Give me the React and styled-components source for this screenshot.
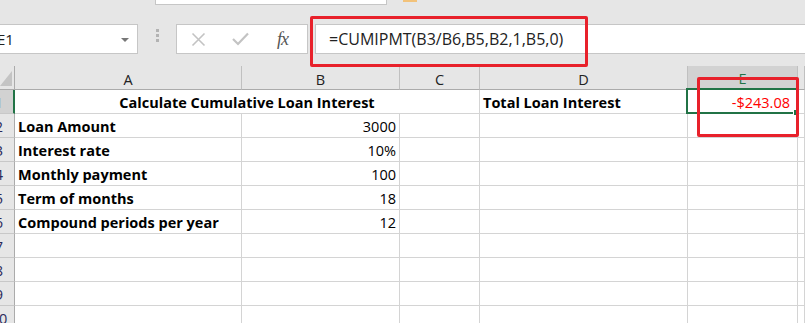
import React from 'react';
import styled, { createGlobalStyle } from 'styled-components';

const GlobalStyle = createGlobalStyle`
  html, body {
    margin: 0;
    padding: 0;
    background: #ffffff;
  }
  body {
    font-family: "Open Sans", Lato, sans-serif;
    overflow: hidden;
  }
`;

const Page = styled.div`
  position: relative;
  width: 805px;
  height: 323px;
  overflow: hidden;
  background: #ffffff;
`;

const Toolbar = styled.div`
  background: #e6e6e6;
  height: 66px;
  display: flex;
  flex-direction: column;
`;

const RibbonStrip = styled.div`
  height: 24px;
  display: flex;
  align-items: flex-start;
`;

const RibbonBox = styled.div`
  margin-left: 155px;
  width: 230px;
  height: 4px;
  background: #ffffff;
  border: 1px solid #c6c6c6;
  border-top: none;
`;

const OrangeTab = styled.div`
  margin-left: 16px;
  width: 14px;
  height: 2px;
  background: #f2c27a;
`;

const FormulaBar = styled.div`
  height: 30px;
  display: flex;
  align-items: stretch;
`;

const NameBox = styled.div`
  width: 137px;
  background: #ffffff;
  border: 1px solid #c6c6c6;
  border-left: none;
  display: flex;
  align-items: center;
  justify-content: space-between;
  font-size: 15px;
  color: #222;
  overflow: hidden;
  span {
    margin-left: -3px;
  }
`;

const DropArrow = styled.div`
  width: 0;
  height: 0;
  margin-right: 8px;
  margin-top: 1px;
  border-left: 4px solid transparent;
  border-right: 4px solid transparent;
  border-top: 4px solid #777;
`;

const Grip = styled.div`
  width: 38px;
  display: flex;
  flex-direction: column;
  align-items: center;
  justify-content: center;
  gap: 2px;
  padding-bottom: 8px;
  i {
    width: 3px;
    height: 3px;
    background: #b3b3b3;
  }
`;

const FxBox = styled.div`
  width: 132px;
  background: #ffffff;
  border: 1px solid #c6c6c6;
  display: flex;
  align-items: center;
  padding-left: 14px;
  box-sizing: border-box;
  gap: 26px;
`;

const FxLabel = styled.span`
  font-family: "Liberation Serif", serif;
  font-style: italic;
  font-size: 18px;
  color: #555;
  margin-left: 2px;
  letter-spacing: -1px;
`;

const FormulaInput = styled.div`
  flex: 1;
  margin-left: 7px;
  background: #ffffff;
  border: 1px solid #c6c6c6;
  border-right: none;
  display: flex;
  align-items: center;
  padding-left: 13px;
  font-size: 16px;
  color: #222;
`;

const Sheet = styled.div`
  display: grid;
  grid-template-columns: 15px 227px 158px 80px 208px 110px 1fr;
  grid-auto-rows: 24px;
  font-size: 14.5px;
`;

const Corner = styled.div`
  background: #e6e6e6;
  border-right: 1px solid #ababab;
  border-bottom: 1px solid #ababab;
  display: flex;
  align-items: flex-end;
  justify-content: flex-end;
  padding: 0 2px 3px 0;
`;

const ColHeader = styled.div`
  background: ${p => (p.$selected ? '#d2d2d2' : '#e6e6e6')};
  border-right: 1px solid #c0c0c0;
  border-bottom: ${p => (p.$selected ? '2px solid #217346' : '1px solid #ababab')};
  color: ${p => (p.$selected ? '#217346' : '#222')};
  display: flex;
  align-items: center;
  justify-content: center;
  padding-top: 3px;
`;

const RowHeader = styled.div`
  background: ${p => (p.$selected ? '#d2d2d2' : '#e6e6e6')};
  border-right: ${p => (p.$selected ? '2px solid #217346' : '1px solid #ababab')};
  border-bottom: 1px solid #c8c8c8;
  overflow: hidden;
  display: flex;
  align-items: center;
  color: #2a2a5a;
  span {
    flex: none;
    width: 30px;
    margin-left: -16px;
    text-align: center;
    padding-top: 2px;
  }
`;

const Cell = styled.div`
  position: relative;
  grid-column: ${p => (p.$span ? `span ${p.$span}` : 'auto')};
  border-right: 1px solid #d4d4d4;
  border-bottom: 1px solid #d4d4d4;
  display: flex;
  align-items: center;
  justify-content: ${p => p.$align || 'flex-start'};
  padding: 2px ${p => p.$padRight || 3}px 0 3px;
  font-weight: ${p => (p.$bold ? 700 : 400)};
  color: ${p => p.$color || '#000'};
  white-space: nowrap;
`;

const Selection = styled.div`
  position: absolute;
  left: -2px;
  top: -2px;
  right: -1px;
  bottom: -1px;
  border: 2px solid #217346;
  pointer-events: none;
  &::after {
    content: '';
    position: absolute;
    right: -4px;
    bottom: -4px;
    width: 5px;
    height: 5px;
    background: #217346;
    border: 1px solid #ffffff;
  }
`;

const Callout = styled.div`
  position: absolute;
  border: 3px solid #e8212b;
  border-radius: 2px;
  box-sizing: border-box;
  pointer-events: none;
`;

const IconCancel = () => (
  <svg width="15" height="15" viewBox="0 0 15 15">
    <path d="M1.5 1.5 L13.5 13.5 M13.5 1.5 L1.5 13.5" stroke="#c3c3c3" strokeWidth="1.6" fill="none" />
  </svg>
);

const IconCheck = () => (
  <svg width="17" height="14" viewBox="0 0 17 14">
    <path d="M1 7 L6 12 L16 1.5" stroke="#c3c3c3" strokeWidth="2.2" fill="none" />
  </svg>
);

const CornerTriangle = () => (
  <svg width="12" height="15" viewBox="0 0 12 15">
    <polygon points="0,15 12,0 12,15" fill="#c4c4c4" />
  </svg>
);

const columns = ['A', 'B', 'C', 'D', 'E', ''];

const rows = [
  ['Loan Amount', '3000'],
  ['Interest rate', '10%'],
  ['Monthly payment', '100'],
  ['Term of months', '18'],
  ['Compound periods per year', '12'],
  ['', ''],
  ['', ''],
  ['', ''],
  ['', ''],
];

export default function App() {
  return (
    <Page>
      <GlobalStyle />
      <Toolbar>
        <RibbonStrip>
          <RibbonBox />
          <OrangeTab />
        </RibbonStrip>
        <FormulaBar>
          <NameBox>
            <span>E1</span>
            <DropArrow />
          </NameBox>
          <Grip>
            <i />
            <i />
            <i />
          </Grip>
          <FxBox>
            <IconCancel />
            <IconCheck />
            <FxLabel>fx</FxLabel>
          </FxBox>
          <FormulaInput>=CUMIPMT(B3/B6,B5,B2,1,B5,0)</FormulaInput>
        </FormulaBar>
      </Toolbar>

      <Sheet>
        <Corner>
          <CornerTriangle />
        </Corner>
        {columns.map((c, i) => (
          <ColHeader key={i} $selected={c === 'E'}>{c}</ColHeader>
        ))}

        <RowHeader $selected><span>1</span></RowHeader>
        <Cell $span={3} $align="center" $bold>Calculate Cumulative Loan Interest</Cell>
        <Cell $bold>Total Loan Interest</Cell>
        <Cell $align="flex-end" $color="#ff0000" $padRight={7}>
          -$243.08
          <Selection />
        </Cell>
        <Cell />

        {rows.map((r, i) => (
          <React.Fragment key={i}>
            <RowHeader><span>{i + 2}</span></RowHeader>
            <Cell $bold>{r[0]}</Cell>
            <Cell $align="flex-end">{r[1]}</Cell>
            <Cell />
            <Cell />
            <Cell />
            <Cell />
          </React.Fragment>
        ))}
      </Sheet>

      <Callout style={{ left: 310, top: 16, width: 278, height: 51 }} />
      <Callout style={{ left: 697, top: 77, width: 102, height: 60 }} />
    </Page>
  );
}
